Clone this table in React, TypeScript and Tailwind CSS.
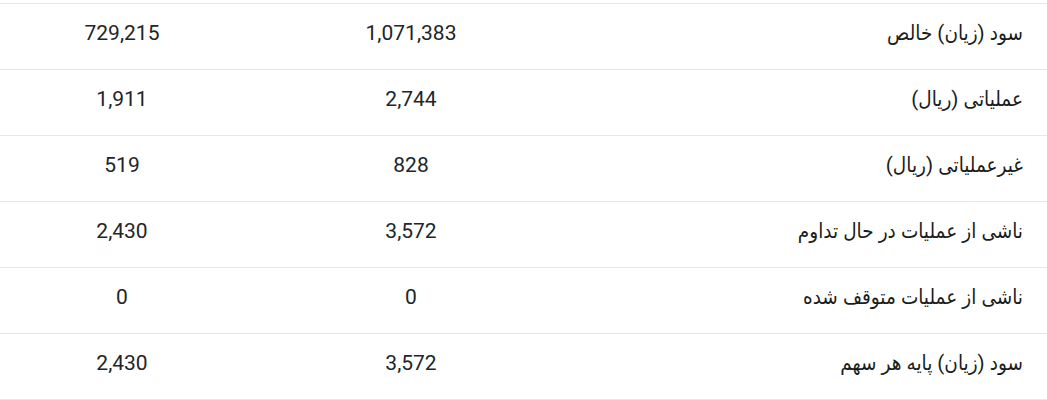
import React from 'react';

interface Row {
  label: string;
  current: string;
  previous: string;
}

const rows: Row[] = [
  { label: 'سود (زیان) خالص', current: '1,071,383', previous: '729,215' },
  { label: 'عملیاتی (ریال)', current: '2,744', previous: '1,911' },
  { label: 'غیرعملیاتی (ریال)', current: '828', previous: '519' },
  { label: 'ناشی از عملیات در حال تداوم', current: '3,572', previous: '2,430' },
  { label: 'ناشی از عملیات متوقف شده', current: '0', previous: '0' },
  { label: 'سود (زیان) پایه هر سهم', current: '3,572', previous: '2,430' },
];

const App: React.FC = () => {
  return (
    <div
      dir="rtl"
      className="w-[1047px] h-[400px] bg-white pt-[3px] overflow-hidden text-[#212529]"
      style={{ fontFamily: 'Roboto, "DejaVu Sans Condensed", "DejaVu Sans", sans-serif' }}
    >
      <div className="border-t border-[#e6e6e6]">
        {rows.map((r, idx) => (
          <div
            key={idx}
            className="grid grid-cols-[469px_334px_244px] h-[66px] items-center border-b border-[#e6e6e6] text-[21px] pb-[6px]"
          >
            <div className="pr-6 text-right text-[20.5px] text-[#1a1d20]">{r.label}</div>
            <div className="text-center">{r.current}</div>
            <div className="text-center">{r.previous}</div>
          </div>
        ))}
      </div>
    </div>
  );
};

export default App;
